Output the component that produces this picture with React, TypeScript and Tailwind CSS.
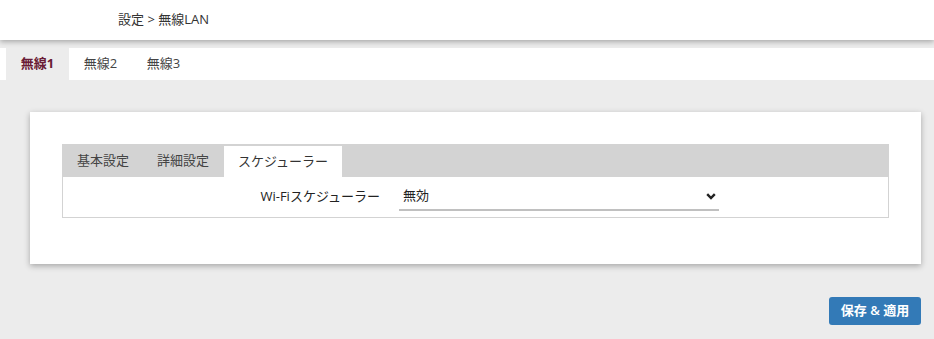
import { useState } from 'react'

const font = { fontFamily: '"Open Sans", "Noto Sans CJK JP", sans-serif' }

const radioTabs = ['無線1', '無線2', '無線3']
const subTabs = ['基本設定', '詳細設定', 'スケジューラー']

const App = () => {
  const [radio, setRadio] = useState(0)
  const [sub, setSub] = useState(2)

  return (
    <div className="min-h-[339px] bg-[#ececec] text-[13px] text-[#333]" style={font}>
      <header className="relative z-10 flex h-10 items-center bg-white pl-[118px] shadow-[0_2px_5px_rgba(0,0,0,0.28)]">
        設定 &gt; 無線LAN
      </header>

      <div className="mt-2 flex h-8 bg-white pl-1.5">
        {radioTabs.map((t, i) => (
          <button
            key={t}
            onClick={() => setRadio(i)}
            className={`w-[63px] text-center ${
              radio === i ? 'bg-[#ececec] font-bold text-[#6a1b35]' : 'text-[#444]'
            }`}
          >
            {t}
          </button>
        ))}
      </div>

      <div className="ml-[30px] mr-[13px] mt-8 bg-white px-8 pb-[46px] pt-8 shadow-[0_2px_6px_rgba(0,0,0,0.3)]">
        <div className="border border-[#d3d3d3]">
          <div className="flex h-8 bg-[#d3d3d3]">
            {subTabs.map((t, i) => (
              <button
                key={t}
                onClick={() => setSub(i)}
                className={`px-[14px] ${
                  sub === i ? 'mt-px ml-px bg-white px-[12px] text-[#333]' : 'text-[#444]'
                }`}
              >
                {t}
              </button>
            ))}
          </div>
          <div className="flex h-10 items-center">
            <label className="w-[317px] text-right text-[#222]">Wi-Fiスケジューラー</label>
            <div className="relative ml-[19px] w-[320px] border-b-2 border-[#c0c0c0]">
              <select className="h-[26px] w-full appearance-none bg-transparent pl-1 text-[13px] text-[#222] outline-none">
                <option>無効</option>
                <option>有効</option>
              </select>
              <svg
                className="pointer-events-none absolute right-[3px] top-[10px]"
                width="10"
                height="7"
                viewBox="0 0 10 7"
              >
                <polyline points="1.2,1.2 5,5 8.8,1.2" fill="none" stroke="#222" strokeWidth="2.4" />
              </svg>
            </div>
          </div>
        </div>
      </div>

      <div className="mr-[13px] mt-[33px] flex justify-end">
        <button className="h-7 w-[92px] rounded-[3px] bg-[#337ab7] font-semibold text-white">
          保存 &amp; 適用
        </button>
      </div>
    </div>
  )
}

export default App
